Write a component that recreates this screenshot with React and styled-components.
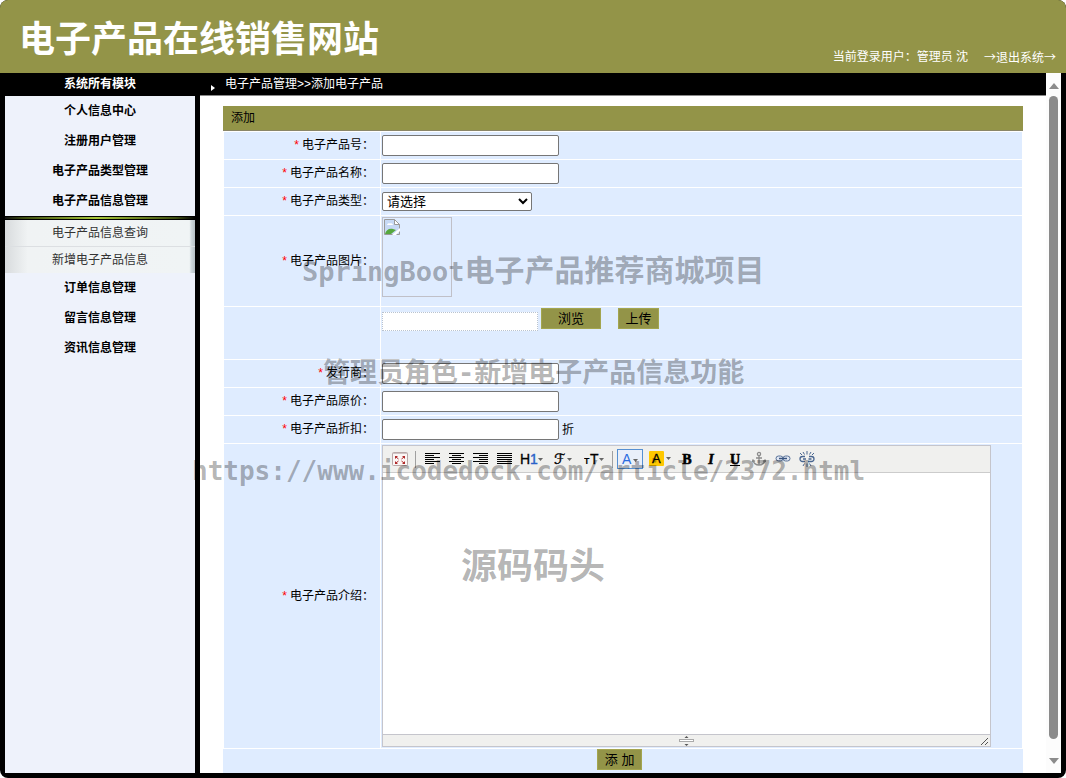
import React from "react";
import styled, { createGlobalStyle, css } from "styled-components";

const GlobalStyle = createGlobalStyle`
  * {
    box-sizing: border-box;
  }
  body {
    margin: 0;
    background: #fff;
    color: #000;
    font-family: "Liberation Sans", "Noto Sans CJK SC", sans-serif;
    font-size: 12px;
    line-height: 18px;
  }
  button,
  input,
  select,
  textarea {
    font-family: inherit;
    margin: 0;
  }
`;

const Shell = styled.div`
  position: relative;
  display: flex;
  flex-direction: column;
  height: 100vh;
  background: #000;
  border-radius: 8px;
  overflow: hidden;
`;

const Header = styled.header`
  display: flex;
  justify-content: space-between;
  align-items: flex-end;
  height: 73px;
  padding: 0 10px 6px 19px;
  flex-shrink: 0;
  background: #939448;
  color: #fff;

  h1 {
    margin: 0;
    font-size: 36px;
    line-height: 54px;
    font-weight: bold;
  }
`;

const UserBar = styled.div`
  display: flex;
  gap: 16px;
  line-height: 20px;

  a {
    color: #fff;
    text-decoration: none;
    font-family: "Noto Sans CJK SC", sans-serif;
  }
`;

const Body = styled.div`
  display: flex;
  flex: 1;
  min-height: 0;
  gap: 5px;
  padding: 0 5px 5px;
`;

const Sidebar = styled.nav`
  display: flex;
  flex-direction: column;
  width: 190px;
  flex-shrink: 0;
  text-align: center;
  background: #eef2fb;

  h2 {
    margin: 0;
    font-size: 12px;
    line-height: 23px;
    background: #000;
    color: #fff;
  }
  a {
    display: block;
    text-decoration: none;
  }
`;

const MenuLink = styled.a`
  color: #000;
  font-weight: bold;
  line-height: 30px;
`;

const SubMenu = styled.div`
  background: linear-gradient(90deg, #d8dbdd, #f0f3f4 12%, #f0f4f5 97%, #d0dade 98%, #b5bfc4);

  &::before {
    content: "";
    display: block;
    height: 2px;
    background: linear-gradient(90deg, #111, #3d4d10 10%, #a9c83a 48%, #3d4d10 90%, #000);
    border-top: 1px solid #000;
    border-bottom: 1px solid #000;
  }
  a {
    color: #333;
    line-height: 26px;
  }
  a + a {
    border-top: 1px solid #dcdfe2;
  }
`;

const Main = styled.main`
  display: flex;
  flex: 1;
  min-width: 0;
  background: #fff;
`;

const Page = styled.div`
  flex: 1;
  min-width: 0;
  overflow: hidden;
`;

const Crumbs = styled.div`
  display: flex;
  align-items: center;
  gap: 10px;
  height: 23px;
  padding-left: 11px;
  background: #000;
  border-bottom: 1px solid #888;
  color: #fff;

  svg {
    margin-top: 8px;
  }
`;

const Form = styled.form`
  display: flex;
  flex-direction: column;
  gap: 1px;
  margin: 10px 23px 0;
`;

const FormTitle = styled.div`
  height: 25px;
  padding-left: 8px;
  line-height: 25px;
  background: #939448;
  border-bottom: 1px solid #8a8668;
`;

const FormRow = styled.div`
  display: grid;
  grid-template-columns: 156px 1fr;
  gap: 1px;
  height: ${(p) => p.$height || 27}px;
  margin: 0 1px;
`;

const LabelCell = styled.div`
  display: flex;
  align-items: center;
  justify-content: flex-end;
  gap: 3px;
  padding: 0 6px 1px 0;
  background: #dfecff;

  b {
    color: #f00;
    font-weight: normal;
  }
`;

const FieldCell = styled.div`
  display: flex;
  align-items: ${(p) => (p.$top ? "flex-start" : "center")};
  gap: 3px;
  padding: 1px;
  background: #dfecff;
`;

const TextBox = styled.input`
  width: 177px;
  height: 21px;
  padding: 1px 2px;
  font-size: 13px;
  background: #fff;
  border: 1px solid #767676;
  border-radius: 2px;
`;

const PathBox = styled(TextBox)`
  width: 156px;
  height: 19px;
  margin-top: 4px;
  border: 1px dotted #b9c3d0;
  border-radius: 0;
`;

const TypeSelect = styled.select`
  width: 150px;
  height: 19px;
  padding: 0;
  font-size: 13px;
  background: #fff;
  color: #000;
  border: 1px solid #767676;
  border-radius: 2px;
`;

const Button = styled.button`
  width: ${(p) => p.$width}px;
  height: 21px;
  padding: 1px 0 0;
  font-size: 13px;
  line-height: 18px;
  color: #000;
  background: #939448;
  border: 1px solid #a3a54f;

  & + & {
    margin-left: 14px;
  }
`;

const Preview = styled.div`
  width: 70px;
  height: 80px;
  padding: 1px;
  border: 1px solid #c0c0c8;
`;

const SubmitRow = styled.div`
  height: 27px;
  text-align: center;
  background: #dfecff;
`;

const Editor = styled.div`
  display: flex;
  flex-direction: column;
  width: 100%;
  max-width: 609px;
  height: 302px;
  border: 1px solid #c5c5cc;
  background: #fff;

  textarea {
    flex: 1;
    width: 100%;
    border: 0;
    outline: 0;
    resize: none;
  }
`;

const Toolbar = styled.div`
  display: flex;
  align-items: center;
  height: 27px;
  padding-left: 5px;
  background: #f0f0ee;
  border-bottom: 1px solid #ccc;
`;

const Tool = styled.button`
  display: flex;
  align-items: center;
  justify-content: center;
  width: ${(p) => (p.$wide ? 31 : 24)}px;
  height: 20px;
  padding: 0;
  background: none;
  border: 0;

  svg {
    flex-shrink: 0;
  }

  ${(p) =>
    p.$active &&
    css`
      width: 26px;
      margin-right: 1px;
      border: 1px solid #5690d2;
      background: #e9effa;
    `}
`;

const Divider = styled.span`
  width: 1px;
  height: 17px;
  margin: 0 4px 0 3px;
  background: #a0a0a0;
`;

const StatusBar = styled.div`
  display: grid;
  grid-template-columns: 12px 1fr 12px;
  justify-items: center;
  align-items: center;
  height: 12px;
  background: #f0f0ee;
  border-top: 1px solid #c5c5cc;
`;

const ScrollTrack = styled.div`
  display: flex;
  flex-direction: column;
  align-items: center;
  width: 15px;
  flex-shrink: 0;
  padding: 10px 0 9px;
  gap: 7px;
  background: #fcfcfc;
`;

const Thumb = styled.div`
  flex: 1;
  width: 9px;
  margin-bottom: 12px;
  border-radius: 5px;
  background: #8b8b8b;
`;

const Watermark = styled.div`
  position: absolute;
  top: ${(p) => p.$top}px;
  left: ${(p) => p.$left}px;
  font-family: "DejaVu Sans Mono", "Noto Sans CJK SC", monospace;
  font-size: ${(p) => p.$size}px;
  line-height: 40px;
  font-weight: bold;
  white-space: nowrap;
  color: rgba(0, 0, 0, 0.3);
  pointer-events: none;

  span {
    font-size: 27px;
  }
`;

const Caret = ({ x = 0, y = 8 }) => (
  <path d={`M${x} ${y}h5l-2.500 3z`} fill="#666" />
);

const alignments = {
  left: [[0, 15], [0, 9], [0, 15], [0, 9], [0, 15], [0, 9]],
  center: [[0, 15], [3, 9], [0, 15], [3, 9], [0, 15], [3, 9]],
  right: [[0, 15], [6, 9], [0, 15], [6, 9], [0, 15], [6, 9]],
  justify: [[0, 15], [0, 15], [0, 15], [0, 15], [0, 15], [0, 15]],
};

const AlignIcon = ({ kind }) => (
  <svg width="15" height="12" shapeRendering="crispEdges">
    {alignments[kind].map(([x, w], i) => (
      <rect key={i} x={x} y={i * 2} width={w} height="1" fill="#000" />
    ))}
  </svg>
);

const FullscreenIcon = () => (
  <svg width="16" height="15" viewBox="0 0 16 15">
    <rect x="0.500" y="0.500" width="15" height="13" rx="1" fill="#fbf6f5" stroke="#b9a9a9" />
    <path d="M1 1.500h14" stroke="#cfc4c4" />
    <path
      d="M3 4h3L3 7zM13 4v3l-3-3zM3 12V9l3 3zM13 12h-3l3-3z"
      fill="#b02a2a"
    />
    <path d="M4 5l2.500 2M12 5L9.500 7M4 11l2.500-2M12 11L9.500 9" stroke="#b02a2a" />
  </svg>
);

const HeadingIcon = () => (
  <svg width="24" height="16" fontFamily="Liberation Sans" fontSize="14">
    <text x="0" y="13" stroke="#000" strokeWidth="0.300">H</text>
    <text x="10" y="13" fill="#2a62c8" stroke="#2a62c8" strokeWidth="0.400">1</text>
    <Caret x={18} y={7} />
  </svg>
);

const FontIcon = () => (
  <svg width="18" height="16">
    <text
      x="0"
      y="13"
      fontFamily="DejaVu Serif, DejaVu Sans"
      fontSize="14"
      stroke="#000"
      strokeWidth="0.400"
    >
      ℱ
    </text>
    <Caret x={13} y={7} />
  </svg>
);

const SizeIcon = () => (
  <svg width="20" height="16" fontFamily="Liberation Sans">
    <text x="0" y="13" fontSize="9" fontWeight="bold">T</text>
    <text x="6" y="13" fontSize="14" stroke="#000" strokeWidth="0.300">T</text>
    <Caret x={15} y={7} />
  </svg>
);

const ColorIcon = () => (
  <svg width="20" height="16" fontFamily="Liberation Sans">
    <text x="2" y="13" fontSize="14" fill="#2a6be0">A</text>
    <Caret x={13} y={8} />
  </svg>
);

const HiliteIcon = () => (
  <svg width="22" height="16" fontFamily="Liberation Sans">
    <rect width="15" height="15" rx="1" fill="#ffc800" />
    <text x="3" y="12" fontSize="13" stroke="#000" strokeWidth="0.300">A</text>
    <Caret x={17} y={6} />
  </svg>
);

const LetterIcon = ({ letter, italic, underline }) => (
  <svg width="14" height="16">
    <text
      x="7"
      y="13"
      textAnchor="middle"
      fontFamily="Liberation Serif"
      fontSize="14"
      fontWeight="bold"
      fontStyle={italic ? "italic" : "normal"}
      stroke="#000"
      strokeWidth="0.600"
    >
      {letter}
    </text>
    {underline && <path d="M2 14.500h10" stroke="#000" />}
  </svg>
);

const AnchorIcon = () => (
  <svg width="14" height="16" fill="none" stroke="#8c8c8c" strokeWidth="1.300">
    <circle cx="7" cy="3" r="1.600" />
    <path d="M7 5v9M4 7h6M1 9c0 3 3 5 6 5s6-2 6-5M0 11l1-2 2 1.500M14 11l-1-2-2 1.500" />
  </svg>
);

const LinkIcon = () => (
  <svg width="16" height="16" fill="none">
    <rect x="1" y="5" width="7" height="5" rx="2.500" fill="#dfe6f2" stroke="#5a7398" />
    <rect x="8" y="5" width="7" height="5" rx="2.500" fill="#dfe6f2" stroke="#5a7398" />
    <path d="M4 7.500h8" stroke="#3a5580" strokeWidth="1.500" />
  </svg>
);

const UnlinkIcon = () => (
  <svg width="16" height="16" fill="none" stroke="#4a6690">
    <path
      d="M6 5.500H3.500a2.500 2.500 0 0 0 0 5H6M10 5.500h2.500a2.500 2.500 0 0 1 0 5H9M4 8h3M9.500 8h3"
      strokeWidth="1.300"
    />
    <path d="M5.500 3.500L4 1M8 3.500V0M10.500 3.500L12 1M5.500 12.500L4 15M8 12.500V16M10.500 12.500L12 15M3 4L1 2M13 4l2-2" />
  </svg>
);

const BrokenImage = () => (
  <svg width="16" height="16">
    <path d="M0.500 0.500h10l5 5v10h-15z" fill="#c7d9f5" stroke="#9a9a9a" />
    <path d="M10.500 0.500v5h5z" fill="#fff" stroke="#9a9a9a" />
    <path d="M3 6a2 2 0 0 1 3-1.500A2 2 0 0 1 9 6z" fill="#fff" />
    <path d="M1 15c1-4 4-6 8-5l3 1-5 4z" fill="#57a83f" />
    <path d="M8 16l8-7v3l-4 4z" fill="#fff" />
  </svg>
);

const Field = ({ id, label, height, top, children }) => (
  <FormRow $height={height}>
    <LabelCell>
      {label && (
        <>
          <b>*</b>
          <label htmlFor={id}>{label}：</label>
        </>
      )}
    </LabelCell>
    <FieldCell $top={top}>{children}</FieldCell>
  </FormRow>
);

const tools = [
  { name: "全屏", icon: <FullscreenIcon /> },
  { divider: true },
  { name: "左对齐", icon: <AlignIcon kind="left" /> },
  { name: "居中", icon: <AlignIcon kind="center" /> },
  { name: "右对齐", icon: <AlignIcon kind="right" /> },
  { name: "两端对齐", icon: <AlignIcon kind="justify" /> },
  { name: "段落", icon: <HeadingIcon />, wide: true },
  { name: "字体", icon: <FontIcon />, wide: true },
  { name: "文字大小", icon: <SizeIcon />, wide: true },
  { divider: true },
  { name: "文字颜色", icon: <ColorIcon />, active: true },
  { name: "文字背景", icon: <HiliteIcon />, wide: true },
  { name: "粗体", icon: <LetterIcon letter="B" /> },
  { name: "斜体", icon: <LetterIcon letter="I" italic /> },
  { name: "下划线", icon: <LetterIcon letter="U" underline /> },
  { name: "锚点", icon: <AnchorIcon /> },
  { name: "超级链接", icon: <LinkIcon /> },
  { name: "取消超级链接", icon: <UnlinkIcon /> },
];

const RichEditor = ({ id }) => (
  <Editor>
    <Toolbar>
      {tools.map((t, i) =>
        t.divider ? (
          <Divider key={i} />
        ) : (
          <Tool key={i} type="button" aria-label={t.name} $wide={t.wide} $active={t.active}>
            {t.icon}
          </Tool>
        )
      )}
    </Toolbar>
    <textarea id={id} />
    <StatusBar>
      <span />
      <svg width="15" height="10">
        <path d="M7.500 0l2 2h-4zM7.500 10l2-2h-4z" fill="#555" />
        <rect x="0.500" y="3.500" width="14" height="2" fill="#fff" stroke="#aaa" />
      </svg>
      <svg width="10" height="10">
        <path d="M2 9l7-7M6 9l3-3" stroke="#555" />
      </svg>
    </StatusBar>
  </Editor>
);

const App = () => {
  return (
    <>
      <GlobalStyle />
      <Shell>
        <Header>
          <h1>电子产品在线销售网站</h1>
          <UserBar>
            <span>当前登录用户：管理员 沈</span>
            <a href="#logout">→退出系统→</a>
          </UserBar>
        </Header>
        <Body>
          <Sidebar>
            <h2>系统所有模块</h2>
            <MenuLink href="#me">个人信息中心</MenuLink>
            <MenuLink href="#users">注册用户管理</MenuLink>
            <MenuLink href="#types">电子产品类型管理</MenuLink>
            <MenuLink href="#products">电子产品信息管理</MenuLink>
            <SubMenu>
              <a href="#list">电子产品信息查询</a>
              <a href="#add">新增电子产品信息</a>
            </SubMenu>
            <MenuLink href="#orders">订单信息管理</MenuLink>
            <MenuLink href="#messages">留言信息管理</MenuLink>
            <MenuLink href="#news">资讯信息管理</MenuLink>
          </Sidebar>
          <Main>
            <Page>
              <Crumbs>
                <svg width="4" height="6">
                  <path d="M0 0l4 3-4 3z" fill="#fff" />
                </svg>
                <span>电子产品管理&gt;&gt;添加电子产品</span>
              </Crumbs>
              <Form>
                <FormTitle>添加</FormTitle>
                <Field id="no" label="电子产品号">
                  <TextBox id="no" />
                </Field>
                <Field id="name" label="电子产品名称">
                  <TextBox id="name" />
                </Field>
                <Field id="type" label="电子产品类型">
                  <TypeSelect id="type">
                    <option>请选择</option>
                  </TypeSelect>
                </Field>
                <Field id="path" label="电子产品图片" height={90} top>
                  <Preview>
                    <BrokenImage />
                  </Preview>
                </Field>
                <Field height={52} top>
                  <PathBox id="path" readOnly />
                  <Button type="button" $width={60}>浏览</Button>
                  <Button type="button" $width={41}>上传</Button>
                </Field>
                <Field id="maker" label="发行商">
                  <TextBox id="maker" />
                </Field>
                <Field id="price" label="电子产品原价">
                  <TextBox id="price" />
                </Field>
                <Field id="discount" label="电子产品折扣">
                  <TextBox id="discount" />
                  <span>折</span>
                </Field>
                <Field id="intro" label="电子产品介绍" height={304} top>
                  <RichEditor id="intro" />
                </Field>
                <SubmitRow>
                  <Button type="button" $width={45}>添 加</Button>
                  &nbsp;&nbsp;
                </SubmitRow>
              </Form>
            </Page>
            <ScrollTrack>
              <svg width="10" height="6">
                <path d="M0 6l5-6 5 6z" fill="#8b8b8b" />
              </svg>
              <Thumb />
              <svg width="10" height="6">
                <path d="M0 0h10L5 6z" fill="#8b8b8b" />
              </svg>
            </ScrollTrack>
          </Main>
        </Body>
        <Watermark $top={251} $left={302} $size={30}>
          <span>SpringBoot</span>电子产品推荐商城项目
        </Watermark>
        <Watermark $top={353} $left={323} $size={27}>管理员角色-新增电子产品信息功能</Watermark>
        <Watermark $top={451} $left={192} $size={26}>https://www.icodedock.com/article/2372.html</Watermark>
        <Watermark $top={547} $left={461} $size={36}>源码码头</Watermark>
      </Shell>
    </>
  );
};

export default App;
